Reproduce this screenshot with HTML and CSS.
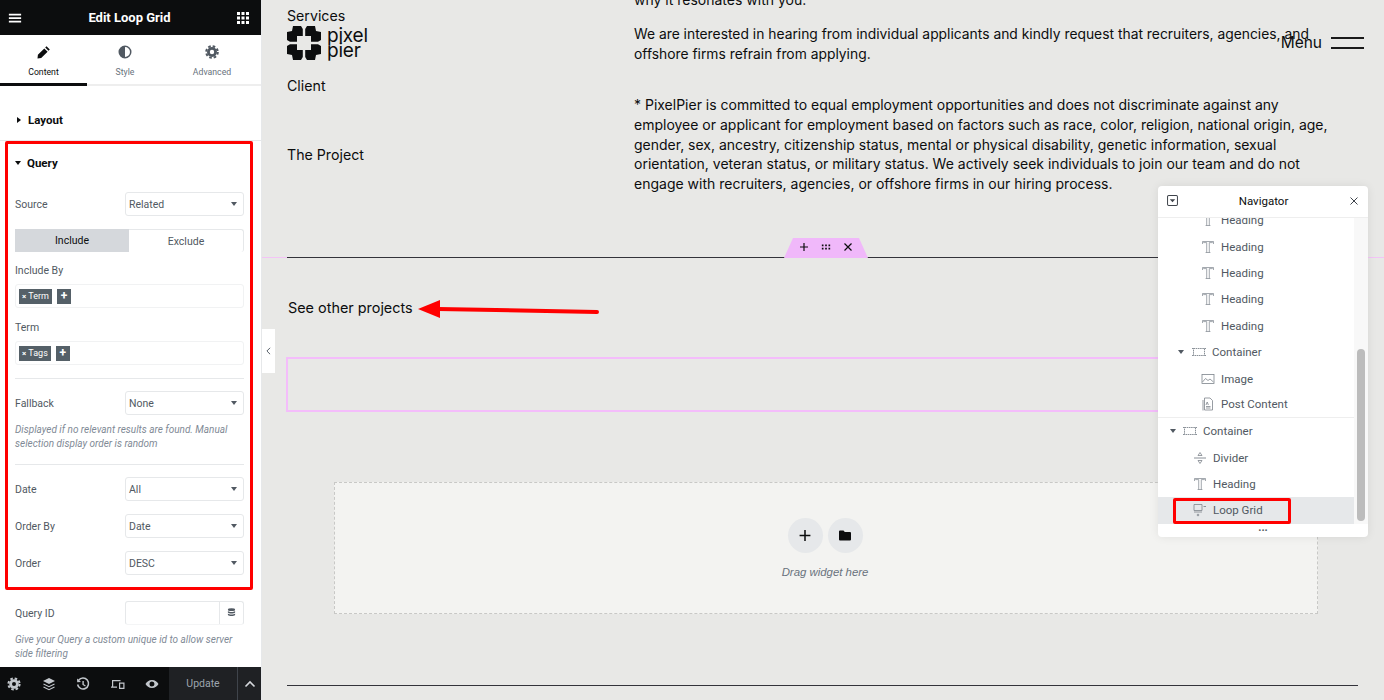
FILE: index.html
```html
<!DOCTYPE html>
<html lang="en">
<head>
    <meta charset="UTF-8">
    <meta name="viewport" content="width=device-width, initial-scale=1.0">
    <title>Edit Loop Grid</title>
    <link rel="stylesheet" href="styles.css">
</head>
<body>
<div class="app">
    <!-- Editor panel -->
    <aside class="panel">
        <header class="panel-head">
            <svg class="head-icon" viewBox="0 0 16 16"><path d="M1 3h14v2H1zM1 7h14v2H1zM1 11h14v2H1z"/></svg>
            <span class="panel-title">Edit Loop Grid</span>
            <svg class="head-icon grid-icon" viewBox="0 0 12 12"><path d="M0 0h3v3H0zM4.500 0h3v3h-3zM9 0h3v3H9zM0 4.500h3v3H0zM4.500 4.500h3v3h-3zM9 4.500h3v3H9zM0 9h3v3H0zM4.500 9h3v3h-3zM9 9h3v3H9z"/></svg>
        </header>

        <nav class="tabs">
            <div class="tab active">
                <svg viewBox="0 0 14 14"><path d="M9.500 1.200l3.300 3.300-1.300 1.300-3.300-3.300zM7.300 3.400l3.300 3.300-6.400 6.400-3.700.4.400-3.700z"/></svg>
                <span>Content</span>
            </div>
            <div class="tab style-tab">
                <svg viewBox="0 0 14 14"><path fill-rule="evenodd" d="M7 .5a6.500 6.500 0 1 1 0 13 6.500 6.500 0 0 1 0-13zM7 2v10a5 5 0 0 0 0-10z"/></svg>
                <span>Style</span>
            </div>
            <div class="tab advanced-tab">
                <svg viewBox="0 0 14 14"><circle cx="7" cy="7" r="3.600" fill="none" stroke="currentColor" stroke-width="2.800"/><circle cx="7" cy="7" r="5.800" fill="none" stroke="currentColor" stroke-width="2" stroke-dasharray="2.600 1.950"/></svg>
                <span>Advanced</span>
            </div>
        </nav>

        <div class="controls">
            <div class="section-head layout-head"><i class="caret-right"></i>Layout</div>

            <div class="section-head query-head"><i class="caret-down dark"></i>Query</div>

            <div class="row first-row">
                <label>Source</label>
                <div class="select">Related<i class="caret-down"></i></div>
            </div>

            <div class="switcher">
                <div class="switch on">Include</div>
                <div class="switch">Exclude</div>
            </div>

            <div class="field-label">Include By</div>
            <div class="tag-input">
                <span class="tag"><b>×</b> Term</span><span class="tag-add">+</span>
            </div>

            <div class="field-label term-label">Term</div>
            <div class="tag-input">
                <span class="tag"><b>×</b> Tags</span><span class="tag-add">+</span>
            </div>

            <hr class="divider">

            <div class="row">
                <label>Fallback</label>
                <div class="select">None<i class="caret-down"></i></div>
            </div>
            <p class="note">Displayed if no relevant results are found. Manual selection display order is random</p>

            <hr class="divider">

            <div class="row">
                <label>Date</label>
                <div class="select">All<i class="caret-down"></i></div>
            </div>
            <div class="row next">
                <label>Order By</label>
                <div class="select">Date<i class="caret-down"></i></div>
            </div>
            <div class="row next">
                <label>Order</label>
                <div class="select">DESC<i class="caret-down"></i></div>
            </div>

            <div class="row query-id">
                <label>Query ID</label>
                <div class="select id-input">
                    <span class="db-btn">
                        <svg viewBox="0 0 10 11"><ellipse cx="5" cy="1.800" rx="4" ry="1.600"/><path d="M1 3.300c1.500 1.400 6.500 1.400 8 0v1.700c-1.500 1.400-6.500 1.400-8 0zM1 6.100c1.500 1.400 6.500 1.400 8 0v1.700c-1.500 1.400-6.500 1.400-8 0z"/></svg>
                    </span>
                </div>
            </div>
            <p class="note">Give your Query a custom unique id to allow server side filtering</p>
        </div>

        <footer class="panel-foot">
            <div class="foot-icons">
                <svg viewBox="0 0 14 14"><circle cx="7" cy="7" r="3.400" fill="none" stroke="currentColor" stroke-width="2.800"/><circle cx="7" cy="7" r="5.600" fill="none" stroke="currentColor" stroke-width="2" stroke-dasharray="2.500 1.900"/></svg>
                <svg viewBox="0 0 14 14"><path d="M7 1l6 3-6 3-6-3z"/><path d="M1.500 7L7 9.700 12.500 7M1.500 10L7 12.700 12.500 10" fill="none" stroke="currentColor" stroke-width="1.200"/></svg>
                <svg viewBox="0 0 14 14"><path d="M2.600 3.200A5.500 5.500 0 1 1 1.600 7.500" fill="none" stroke="currentColor" stroke-width="1.500"/><path d="M1 1.500l.2 3.800 3.800-.4zM6.400 4h1.400v3.200l2 1.300-.7 1-2.700-1.700z"/></svg>
                <svg viewBox="0 0 14 14"><path d="M1 9.500V3h8.500v1.200H2.200v5.300H6v1.200H0V9.500z"/><path fill-rule="evenodd" d="M8 5.500h5.500V12H8zM9.200 6.700v4.100h3.100V6.700z"/></svg>
                <svg viewBox="0 0 14 14"><path fill-rule="evenodd" d="M7 3c3 0 5.400 1.800 6.500 4C12.400 9.200 10 11 7 11S1.600 9.200.5 7C1.600 4.800 4 3 7 3zm0 1.500a2.500 2.500 0 1 0 0 5 2.500 2.500 0 0 0 0-5z"/></svg>
            </div>
            <div class="update">Update</div>
            <div class="foot-arrow">
                <svg viewBox="0 0 12 12"><path d="M1.500 8.500L6 4l4.500 4.500" fill="none" stroke="currentColor" stroke-width="1.600"/></svg>
            </div>
        </footer>
    </aside>

    <!-- Page preview -->
    <main class="preview">
        <section class="project">
            <div class="meta">
                <div class="meta-label">Services</div>
                <div class="logo">
                    <svg viewBox="0 0 34 34">
                        <path d="M6 0h8l1.800 3v7H10v5.800H3L0 14V6l5-1z"/>
                        <path d="M6 0h8l1.800 3v7H10v5.800H3L0 14V6l5-1z" transform="matrix(-1 0 0 1 34 0)"/>
                        <path d="M6 0h8l1.800 3v7H10v5.800H3L0 14V6l5-1z" transform="matrix(1 0 0 -1 0 34)"/>
                        <path d="M6 0h8l1.800 3v7H10v5.800H3L0 14V6l5-1z" transform="matrix(-1 0 0 -1 34 34)"/>
                    </svg>
                    <span class="logo-text">pixel<br>pier</span>
                </div>
                <div class="meta-label client">Client</div>
                <div class="meta-label the-project">The Project</div>
            </div>
            <div class="copy">
                <p class="cut">why it resonates with you.</p>
                <p class="apply">We are interested in hearing from individual applicants and kindly request that recruiters, agencies, and offshore firms refrain from applying.</p>
                <p class="small-print">* PixelPier is committed to equal employment opportunities and does not discriminate against any employee or applicant for employment based on factors such as race, color, religion, national origin, age, gender, sex, ancestry, citizenship status, mental or physical disability, genetic information, sexual orientation, veteran status, or military status. We actively seek individuals to join our team and do not engage with recruiters, agencies, or offshore firms in our hiring process.</p>
            </div>
        </section>

        <section class="others">
            <div class="section-handle">
                <svg viewBox="0 0 10 10"><path d="M4.400 1h1.200v3.400H9v1.200H5.600V9H4.400V5.600H1V4.400h3.400z"/></svg>
                <svg viewBox="0 0 12 10"><path d="M1 2h2v2H1zM5 2h2v2H5zM9 2h2v2H9zM1 6h2v2H1zM5 6h2v2H5zM9 6h2v2H9z"/></svg>
                <svg viewBox="0 0 10 10"><path d="M1.500 1.500l7 7M8.500 1.500l-7 7" fill="none" stroke="currentColor" stroke-width="1.200"/></svg>
            </div>
            <h2 class="others-title">See other projects</h2>
            <div class="loop-box"></div>
            <div class="drop-zone">
                <div class="drop-btns">
                    <span class="drop-btn">
                        <svg viewBox="0 0 12 12"><path d="M5.300 1h1.400v4.300H11v1.400H6.700V11H5.300V6.700H1V5.300h4.300z"/></svg>
                    </span>
                    <span class="drop-btn">
                        <svg viewBox="0 0 14 12"><path d="M1 2a1 1 0 0 1 1-1h3.500l1.300 1.500H12a1 1 0 0 1 1 1V10a1 1 0 0 1-1 1H2a1 1 0 0 1-1-1z"/></svg>
                    </span>
                </div>
                <div class="drop-text">Drag widget here</div>
            </div>
            <div class="bottom-line"></div>
        </section>

        <div class="site-menu">
            <span>Menu</span>
            <i class="menu-lines"></i>
        </div>
    </main>

    <button class="collapse">
        <svg viewBox="0 0 6 10"><path d="M5 1L1 5l4 4" fill="none" stroke="currentColor" stroke-width="1.200"/></svg>
    </button>

    <!-- Navigator -->
    <div class="navigator">
        <div class="nav-head">
            <svg class="nav-toggle" viewBox="0 0 12 12"><rect x=".6" y=".6" width="10.800" height="10.800" rx="1.200" fill="none" stroke="currentColor" stroke-width="1.100"/><path d="M3 4.500h6L6 8z"/></svg>
            <span>Navigator</span>
            <svg class="nav-close" viewBox="0 0 10 10"><path d="M1.500 1.500l7 7M8.500 1.500l-7 7" fill="none" stroke="currentColor" stroke-width="1"/></svg>
        </div>
        <div class="nav-body">
            <ul class="tree">
                <li class="depth-3"><svg class="t-icon" viewBox="0 0 14 14"><use href="#heading-icon"/></svg>Heading</li>
                <li class="depth-3"><svg class="t-icon" viewBox="0 0 14 14"><path id="heading-icon" d="M1.500 4V1.500h11V4M2.200 2.600h3.500M8.300 2.600h3.500M5.700 2.600v9.900M8.300 2.600v9.900M4.600 12.500h4.800" fill="none" stroke="currentColor" stroke-width=".7"/></svg>Heading</li>
                <li class="depth-3"><svg class="t-icon" viewBox="0 0 14 14"><use href="#heading-icon"/></svg>Heading</li>
                <li class="depth-3"><svg class="t-icon" viewBox="0 0 14 14"><use href="#heading-icon"/></svg>Heading</li>
                <li class="depth-3"><svg class="t-icon" viewBox="0 0 14 14"><use href="#heading-icon"/></svg>Heading</li>
                <li class="depth-2"><i class="caret-down small"></i><svg class="t-icon" viewBox="0 0 14 14"><use href="#box-icon"/></svg>Container</li>
                <li class="depth-3"><svg class="t-icon" viewBox="0 0 14 14"><rect x="1" y="2.500" width="12" height="9" fill="none" stroke="currentColor" stroke-width=".8"/><path d="M1.500 10l3-3.500 2.500 2 2-1.500 3.500 3" fill="none" stroke="currentColor" stroke-width=".8"/></svg>Image</li>
                <li class="depth-3 last"><svg class="t-icon" viewBox="0 0 14 14"><path d="M3.500 1h5.500l2.500 2.500V13h-8zM2 3v10.500M5 9.500h4.500M5 11h4.500M5 8l1.200-3 1.200 3" fill="none" stroke="currentColor" stroke-width=".8"/></svg>Post Content</li>
                <li class="depth-1"><i class="caret-down small"></i><svg class="t-icon" viewBox="0 0 14 14"><path id="box-icon" d="M1.500 3.500h11v7h-11zM0 3.500h1.500M12.500 3.500H14M0 10.500h1.500M12.500 10.500H14" fill="none" stroke="currentColor" stroke-width=".9" stroke-dasharray="1.600 .6"/></svg>Container</li>
                <li class="depth-2b"><svg class="t-icon" viewBox="0 0 14 14"><path d="M1 7h12" fill="none" stroke="currentColor" stroke-width=".9"/><path d="M7 1.500L5 4.500h4zM7 12.500L5 9.500h4z" fill="none" stroke="currentColor" stroke-width=".8"/></svg>Divider</li>
                <li class="depth-2b"><svg class="t-icon" viewBox="0 0 14 14"><use href="#heading-icon"/></svg>Heading</li>
                <li class="depth-2b selected"><svg class="t-icon" viewBox="0 0 14 14"><path d="M1 1.500h8v6H1zM1 9h8" fill="none" stroke="currentColor" stroke-width=".8"/><path d="M10.500 3.500H13M3.800 12h2.400M5 10.800v2.400" fill="none" stroke="currentColor" stroke-width=".9"/></svg>Loop Grid</li>
            </ul>
            <div class="nav-scroll"><i></i></div>
        </div>
        <div class="nav-foot">...</div>
    </div>

    <!-- Annotations drawn over the screenshot -->
    <div class="mark mark-query"></div>
    <div class="mark mark-loop"></div>
    <svg class="mark-arrow" viewBox="0 0 190 24">
        <path d="M179 15L20 12" fill="none" stroke="#ff0000" stroke-width="4" stroke-linecap="round"/>
        <path d="M0 12L22 3V21z" fill="#ff0000"/>
    </svg>
</div>
</body>
</html>
```

FILE: styles.css
```css
* {
    box-sizing: border-box;
}

body {
    margin: 0;
    font-family: "Liberation Sans", Arial, sans-serif;
}

.app {
    position: relative;
    display: flex;
    width: 1384px;
    height: 700px;
    overflow: hidden;
    background-color: #e8e8e6;
}

/* Panel */
.panel {
    display: flex;
    flex-direction: column;
    flex: 0 0 262px;
    width: 262px;
    height: 700px;
    background-color: #ffffff;
    border-right: 1px solid #e6e8ea;
    font-family: Roboto, sans-serif;
    color: #515962;
}

.panel-head {
    display: flex;
    align-items: center;
    justify-content: space-between;
    height: 35px;
    padding: 0 12px 0 8px;
    background-color: #0c0d0e;
    color: #ffffff;
}

.head-icon {
    width: 14px;
    height: 14px;
    fill: #ffffff;
}

.head-icon.grid-icon {
    width: 12px;
    height: 12px;
}

.panel-title {
    font-size: 13px;
    font-weight: 700;
}

.tabs {
    display: flex;
    height: 51px;
    border-bottom: 2px solid #eeeeee;
}

.tab {
    display: flex;
    flex-direction: column;
    align-items: center;
    width: 87px;
    height: 51px;
    padding-top: 10px;
    font-size: 8.700px;
    color: #69727d;
}

.tab.style-tab {
    width: 76px;
}

.tab.advanced-tab {
    width: 98px;
}

.tab svg {
    width: 14px;
    height: 14px;
    margin-bottom: 8px;
    fill: currentColor;
    color: #515962;
}

.tab.active {
    color: #0c0d0e;
    border-bottom: 3px solid #0c0d0e;
}

.tab.active svg {
    color: #0c0d0e;
}

.controls {
    flex: 1;
    overflow: hidden;
    padding: 0 17px 0 15px;
}

.section-head {
    display: flex;
    align-items: center;
    gap: 6px;
    font-size: 11.500px;
    font-weight: 700;
    color: #0c0d0e;
}

.layout-head {
    height: 55px;
    margin: 0 -17px 0 -15px;
    padding: 14px 0 0 17px;
    gap: 7px;
    border-bottom: 1px solid #e6e8ea;
}

.query-head {
    height: 43px;
    padding-top: 1px;
}

.caret-right {
    width: 0;
    height: 0;
    border-left: 4px solid #0c0d0e;
    border-top: 3px solid transparent;
    border-bottom: 3px solid transparent;
}

.caret-down {
    display: block;
    width: 0;
    height: 0;
    border-top: 4px solid #515962;
    border-left: 3.500px solid transparent;
    border-right: 3.500px solid transparent;
}

.caret-down.dark {
    border-top-color: #0c0d0e;
}

.row {
    display: flex;
    align-items: center;
    justify-content: space-between;
    height: 24px;
}

.row.first-row {
    margin-top: 8px;
}

.row.next {
    margin-top: 13px;
}

.row label {
    font-size: 10.500px;
}

.select {
    display: flex;
    align-items: center;
    justify-content: space-between;
    width: 119px;
    height: 24px;
    padding: 0 6px 0 3px;
    border: 1px solid #e6e8ea;
    border-radius: 3px;
    font-size: 10.500px;
}

.switcher {
    display: flex;
    height: 23px;
    margin-top: 13px;
    border: 1px solid #e6e8ea;
    border-left: 0;
    border-bottom: 0;
    border-radius: 3px;
    font-size: 10.500px;
}

.switch {
    display: flex;
    align-items: center;
    justify-content: center;
    flex: 1;
}

.switch.on {
    background-color: #d5d8dc;
    color: #0c0d0e;
    margin-top: -1px;
    height: 23px;
}

.field-label {
    margin-top: 12px;
    height: 13px;
    line-height: 13px;
    font-size: 10.500px;
}

.field-label.term-label {
    margin-top: 13px;
}

.tag-input {
    display: flex;
    align-items: center;
    gap: 5px;
    height: 24px;
    margin-top: 7px;
    padding-left: 3px;
    border: 1px solid #f1f2f3;
    border-radius: 3px;
}

.tag {
    height: 15px;
    padding: 0 3px;
    background-color: #556068;
    color: #ffffff;
    font-size: 9px;
    line-height: 15px;
}

.tag b {
    font-size: 8px;
}

.tag-add {
    width: 14px;
    height: 15px;
    background-color: #556068;
    color: #ffffff;
    font-size: 12px;
    font-weight: 700;
    line-height: 14px;
    text-align: center;
}

.divider {
    height: 1px;
    margin: 13px 0 12px;
    border: 0;
    background-color: #e6e8ea;
}

.note {
    margin: 8px 0 13px;
    font-size: 10px;
    font-style: italic;
    line-height: 14px;
    color: #818a96;
}

.row.query-id {
    margin-top: 26px;
}

.id-input {
    justify-content: flex-end;
    padding: 0;
    border-bottom-color: #f4f5f6;
}

.db-btn {
    display: flex;
    align-items: center;
    justify-content: center;
    width: 24px;
    height: 22px;
    border-left: 1px solid #e6e8ea;
}

.db-btn svg {
    width: 9px;
    height: 10px;
    fill: #515962;
}

.panel-foot {
    display: flex;
    height: 33px;
    background-color: #0c0d0e;
    color: #a4afb7;
}

.foot-icons {
    display: flex;
    align-items: center;
    gap: 20.500px;
    width: 169px;
    padding-left: 7px;
}

.foot-icons svg {
    width: 14px;
    height: 14px;
    fill: currentColor;
    color: #c2c6cb;
}

.update {
    display: flex;
    align-items: center;
    justify-content: center;
    width: 68px;
    background-color: #1f2124;
    font-size: 10.500px;
    color: #9da5ae;
}

.foot-arrow {
    display: flex;
    align-items: center;
    justify-content: center;
    flex: 1;
    background-color: #1f2124;
    border-left: 1px solid #3f444b;
}

.foot-arrow svg {
    width: 12px;
    height: 12px;
    color: #d5d8dc;
}

/* Preview */
.preview {
    position: relative;
    flex: 1;
    height: 700px;
    overflow: hidden;
    color: #0c0d0e;
    font-family: Inter, sans-serif;
}

.project {
    display: flex;
    height: 257px;
    padding-left: 25px;
}

.meta {
    width: 347px;
    padding-top: 7px;
    font-size: 14.200px;
}

.meta-label {
    height: 18px;
    line-height: 18px;
}

.logo {
    display: flex;
    align-items: center;
    gap: 6px;
    height: 34px;
    margin-top: 1px;
}

.logo svg {
    width: 34px;
    height: 34px;
    fill: #0c0d0e;
}

.logo-text {
    font-size: 19px;
    line-height: 15px;
    letter-spacing: -0.200px;
}

.meta-label.client {
    margin-top: 17px;
}

.meta-label.the-project {
    margin-top: 51px;
}

.copy {
    width: 700px;
    font-size: 14px;
    line-height: 19.700px;
}

.copy p {
    margin: 0;
}

.copy .cut {
    margin-top: -10px;
    margin-bottom: 14px;
}

.copy .apply {
    font-size: 13.850px;
    line-height: 20.300px;
}

.copy .small-print {
    margin-top: 31px;
}

.others {
    position: relative;
    height: 443px;
    border-top: 1px solid #f3c4f6;
}

.others::before {
    content: "";
    position: absolute;
    top: -1px;
    left: 25px;
    right: 26px;
    height: 1px;
    background-color: #33333a;
}

.section-handle {
    position: absolute;
    top: -20px;
    left: 522px;
    display: flex;
    align-items: center;
    justify-content: center;
    gap: 12px;
    width: 84px;
    height: 20px;
    padding: 0 1px 2px 0;
    background-color: #f0b8fa;
    color: #0c0d0e;
    clip-path: polygon(9px 0, 75px 0, 84px 100%, 0 100%);
}

.section-handle svg {
    width: 10px;
    height: 10px;
    fill: currentColor;
}

.others-title {
    margin: 41px 0 0 26px;
    font-size: 14.400px;
    font-weight: 400;
    line-height: 18px;
}

.loop-box {
    height: 55px;
    margin: 40px 26px 0 24px;
    border: 2px solid #f4bdfb;
}

.drop-zone {
    display: flex;
    flex-direction: column;
    align-items: center;
    height: 132px;
    margin: 70px 66px 0 72px;
    padding: 35px 2px 0 0;
    background-color: #f3f3f1;
    border: 1px dashed #c8c8c6;
}

.drop-btns {
    display: flex;
    gap: 5px;
}

.drop-btn {
    display: flex;
    align-items: center;
    justify-content: center;
    width: 35px;
    height: 35px;
    border-radius: 50%;
    background-color: #e6e8ea;
}

.drop-btn svg {
    width: 14px;
    height: 13px;
    fill: #0c0d0e;
}

.drop-text {
    margin-top: 13px;
    font-family: "Liberation Sans", Arial, sans-serif;
    font-size: 11.400px;
    font-style: italic;
    color: #69727d;
}

.bottom-line {
    height: 1px;
    margin: 71px 26px 0 25px;
    background-color: #33333a;
}

.site-menu {
    position: absolute;
    top: 34px;
    right: 20px;
    display: flex;
    align-items: center;
    gap: 9px;
    font-size: 15.500px;
    line-height: 18px;
}

.menu-lines {
    display: block;
    width: 33px;
    height: 12px;
    border-top: 2px solid #1a1a1a;
    border-bottom: 2px solid #1a1a1a;
}

.collapse {
    position: absolute;
    top: 329px;
    left: 262px;
    display: flex;
    align-items: center;
    justify-content: center;
    width: 13px;
    height: 44px;
    padding: 0;
    border: 0;
    background-color: #ffffff;
    color: #515962;
}

.collapse svg {
    width: 5px;
    height: 8px;
}

/* Navigator */
.navigator {
    position: absolute;
    top: 186px;
    left: 1158px;
    display: flex;
    flex-direction: column;
    width: 210px;
    height: 351px;
    overflow: hidden;
    background-color: #ffffff;
    border-radius: 4px;
    box-shadow: 0 0 10px rgba(0, 0, 0, 0.08);
    font-family: Roboto, sans-serif;
    font-size: 11.500px;
    color: #515962;
}

.nav-head {
    display: flex;
    align-items: center;
    justify-content: space-between;
    flex: 0 0 32px;
    padding: 0 9px 2px;
    border-bottom: 1px solid #eeeeee;
    color: #0c0d0e;
}

.nav-toggle {
    width: 11px;
    height: 11px;
    fill: #3f444b;
    color: #3f444b;
}

.nav-close {
    width: 10px;
    height: 10px;
    color: #3f444b;
}

.nav-body {
    display: flex;
    height: 306px;
    overflow: hidden;
}

.tree {
    flex: 1;
    margin: -11px 0 0;
    padding: 0;
    list-style: none;
}

.tree li {
    display: flex;
    align-items: center;
    height: 26.400px;
    white-space: nowrap;
}

.tree li.last {
    border-bottom: 1px solid #eeeeee;
}

.tree .depth-1 {
    padding-left: 12px;
}

.tree .depth-2 {
    padding-left: 20px;
}

.tree .depth-2b {
    padding-left: 35px;
}

.tree .depth-3 {
    padding-left: 43px;
}

.tree .selected {
    background-color: #e6e8ea;
}

.t-icon {
    flex: 0 0 14px;
    width: 14px;
    height: 14px;
    margin-right: 6px;
    fill: none;
    color: #7d848c;
}

.caret-down.small {
    margin-right: 8px;
}

.tree .depth-1 .caret-down.small {
    margin-right: 7px;
}

.nav-scroll {
    flex: 0 0 14px;
    padding: 131px 3px 1px;
    background-color: #f8f8f8;
}

.nav-scroll i {
    display: block;
    height: 172px;
    border-radius: 4px;
    background-color: #bcbcbc;
}

.nav-foot {
    flex: 1;
    font-size: 11px;
    font-weight: 700;
    line-height: 8px;
    text-align: center;
    color: #515962;
}

/* Red marks */
.mark {
    position: absolute;
    border: 3px solid #ff0000;
    border-radius: 2px;
    pointer-events: none;
}

.mark-query {
    top: 141px;
    left: 5px;
    width: 248px;
    height: 449px;
}

.mark-loop {
    top: 498px;
    left: 1173px;
    width: 118px;
    height: 26px;
}

.mark-arrow {
    position: absolute;
    top: 297px;
    left: 418px;
    width: 190px;
    height: 24px;
}
```
